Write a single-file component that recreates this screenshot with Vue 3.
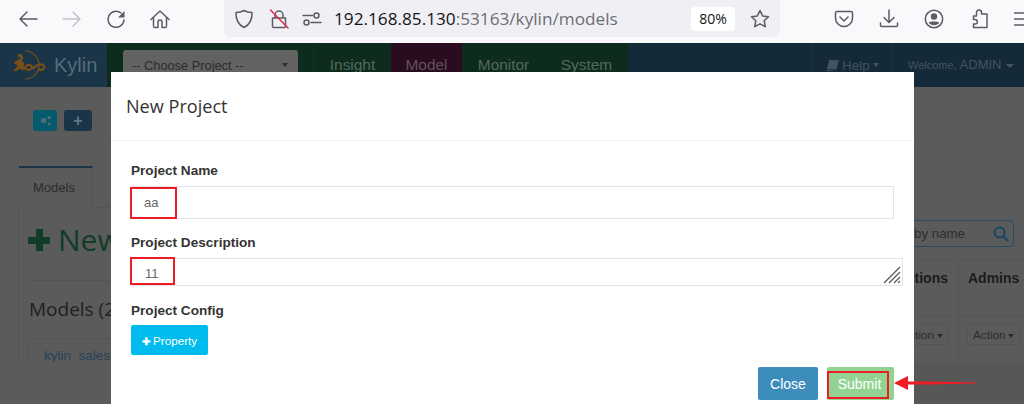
<template>
  <div class="page">
    <header class="toolbar">
      <nav class="tool-left">
        <svg class="ic" viewBox="0 0 20 20"><path d="M19 10H2M9 3 2 10l7 7" /></svg>
        <svg class="ic dim" viewBox="0 0 20 20"><path d="M1 10h17M11 3l7 7-7 7" /></svg>
        <svg class="ic" viewBox="0 0 20 20"><path d="M18 11a8 8 0 1 1-3-7" /><path class="fill" d="M18.500 2v6.500h-6.500z" /></svg>
        <svg class="ic" viewBox="0 0 20 20"><path d="M1 10.500 10 2l9 8.500M3.500 8.500V17a1.500 1.500 0 0 0 1.500 1.500h3V13a2 2 0 0 1 4 0v5.500h3a1.500 1.500 0 0 0 1.500-1.500V8.500" /></svg>
      </nav>
      <div class="urlbar">
        <svg class="ic shield" viewBox="0 0 20 20"><path d="M10 1.500c3 1.800 5 2 8 2 .3 8-2.800 12.500-8 15-5.200-2.500-8.300-7-8-15 3 0 5-.2 8-2z" /></svg>
        <svg class="ic lock" viewBox="0 0 20 20"><path d="M6 9V6a4 4 0 0 1 8 0v3M3.500 9h13v8.500a1 1 0 0 1-1 1h-11a1 1 0 0 1-1-1z" /><path class="slash" d="M1.500 1 19 19" /></svg>
        <svg class="ic perm" viewBox="0 0 20 20"><circle cx="14.500" cy="6.500" r="2.500" /><circle cx="4.500" cy="13.500" r="2.500" /><path d="M1 6.500h9.500M9 13.500h10" /></svg>
        <span class="url"><b>192.168.85.130</b>:53163/kylin/models</span>
        <span class="zoom">80%</span>
        <svg class="ic star" viewBox="0 0 20 20"><path d="m10 1.500 2.600 5.400 5.900.8-4.300 4.100 1.100 5.900-5.300-2.900-5.300 2.900 1.100-5.900-4.300-4.100 5.900-.8z" /></svg>
      </div>
      <nav class="tool-right">
        <svg class="ic" viewBox="0 0 20 20"><path d="M3 2.500h14a1.500 1.500 0 0 1 1.500 1.500v5a8.500 8.500 0 0 1-17 0V4A1.500 1.500 0 0 1 3 2.500z" /><path d="m6 8 4 4 4-4" /></svg>
        <svg class="ic" viewBox="0 0 20 20"><path d="M10 1v12.500M5 8.500l5 5 5-5M1.500 14v2.500a1 1 0 0 0 1 1h15a1 1 0 0 0 1-1V14" /></svg>
        <svg class="ic" viewBox="0 0 20 20"><circle cx="10" cy="10" r="8.700" /><circle class="fill" cx="10" cy="7.500" r="3.200" /><path class="fill" d="M4.500 13.500c2-1.500 9-1.500 11 0-2.500 3.500-8.500 3.500-11 0z" /></svg>
        <svg class="ic" viewBox="0 0 20 20"><path d="M7.500 3.500a2.500 2.500 0 0 1 5 0V5h5.500v13.500H4.500V15h1.500a2.300 2.300 0 0 0 0-4.600H4.500V7H7.500z" /></svg>
        <svg class="ic" viewBox="0 0 20 20"><path d="M0 4h20M0 10h20M0 16h20" /></svg>
      </nav>
    </header>

    <div class="backdrop">
      <div class="topnav">
        <div class="brand">
          <svg class="logo" viewBox="0 0 34 32">
            <path class="arc" d="M13 2A14 14 0 1 1 13 30" />
            <path class="body" d="M6 5l4 1 1 3-2 3 3 2-1 3 2 3-3 1-2-2-2 2-4 1 2-3 2-1-1-3-3-1 4-3 3-1-1-3-2 1z" />
            <path d="M13 19c1-4 6-4 7-1s-5 4-7 1zM21 20c3-5 9-6 11-3s-3 5-6 3" />
          </svg>
          <span>Kylin</span>
        </div>
        <div class="green">
          <div class="select"><span>-- Choose Project --</span><i class="caret small"></i></div>
          <div class="menus">
            <span class="menu">Insight</span>
            <span class="menu active">Model</span>
            <span class="menu">Monitor</span>
            <span class="menu">System</span>
          </div>
        </div>
        <div class="nav-right">
          <span class="help"><svg class="book" viewBox="0 0 14 14"><path d="M3.500 1H14l-2.500 10H1zM1 11.500 .5 13H11" /></svg>Help<i class="caret tight"></i></span>
          <span class="user"><small>Welcome,</small> ADMIN<i class="caret"></i></span>
        </div>
      </div>

      <main class="content">
        <section class="under-left">
          <div class="mini-buttons">
            <span class="mini teal"><svg viewBox="0 0 14 12"><circle cx="5" cy="6" r="3" /><circle cx="11" cy="3" r="1.800" /><circle cx="11" cy="9.500" r="1.800" /></svg></span>
            <span class="mini navy">+</span>
          </div>
          <div class="tab">Models</div>
          <div class="panel">
            <div class="new"><i class="plus"></i>New</div>
            <div class="rule"></div>
            <h3>Models (2)</h3>
            <div class="model-box"><a>kylin_sales</a></div>
          </div>
        </section>
        <section class="under-right">
          <div class="search"><span>by name</span>
            <svg viewBox="0 0 16 16"><circle cx="6.500" cy="6.500" r="5" /><path d="m10 10 5 5" /></svg>
          </div>
          <div class="table">
            <div class="th first">Actions</div>
            <div class="th">Admins</div>
            <div class="td first"><span class="act">Action<i class="caret dark"></i></span></div>
            <div class="td"><span class="act">Action<i class="caret dark"></i></span></div>
          </div>
          <div class="band"></div>
        </section>
      </main>
    </div>

    <div class="modal">
      <div class="modal-head">New Project</div>
      <form class="modal-body">
        <label>Project Name</label>
        <div class="field name">aa<span class="mark mark-a"></span></div>
        <label>Project Description</label>
        <div class="field desc">11<span class="mark mark-b"></span>
          <svg class="grip" viewBox="0 0 18 18"><path d="M17 1 1 17M17 6 6 17M17 11l-6 6M17 15l-2 2" /></svg>
        </div>
        <label>Project Config</label>
        <button type="button" class="prop"><b>✚</b> Property</button>
      </form>
      <div class="modal-foot">
        <button type="button" class="close">Close</button>
        <button type="button" class="submit">Submit<span class="mark mark-c"></span></button>
      </div>
    </div>

    <svg class="arrow" viewBox="0 0 82 14"><path d="M0 7 14 0v5.500h20l48 1v1L34 8.500H14V14z" /></svg>
  </div>
</template>

<script setup>
</script>

<style>
html, body { margin: 0; background: #5b5b5b; }
</style>

<style scoped>
.page { position: relative; width: 1024px; height: 404px; overflow: hidden; font-family: "Liberation Sans", Arial, sans-serif; background: #5b5b5b; }
.toolbar { height: 43px; background: #f9f9fb; display: flex; align-items: flex-start; box-sizing: border-box; }
.ic { width: 20px; height: 20px; fill: none; stroke: #5b5b66; stroke-width: 1.500; flex: none; stroke-linejoin: round; stroke-linecap: round; }
.ic .fill { fill: #5b5b66; stroke: none; }
.ic.dim { stroke: #c2c2c8; }
.tool-left { width: 224px; height: 37px; display: flex; align-items: center; gap: 24px; padding-left: 18px; box-sizing: border-box; flex: none; }
.urlbar { width: 556px; height: 37px; background: #f0f0f4; border-radius: 0 0 6px 6px; display: flex; align-items: center; box-sizing: border-box; padding-left: 10px; flex: none; }
.lock { margin-left: 15px; }
.lock .slash { stroke: #e22850; }
.perm { margin-left: 13px; }
.url { margin-left: 12px; font: 17.200px/24px "Open Sans", sans-serif; color: #6d6d74; width: 357px; flex: none; white-space: nowrap; }
.url b { font-weight: 400; color: #15141a; }
.zoom { width: 44px; height: 24px; flex: none; background: #fff; border-radius: 4px; font: 14px/24px "Open Sans", sans-serif; text-align: center; color: #15141a; }
.star { margin-left: 15px; }
.tool-right { flex: 1; height: 37px; display: flex; align-items: center; gap: 25px; padding-left: 54px; overflow: hidden; }

.topnav { height: 44px; display: flex; background: #1a3548; }
.brand { width: 107px; flex: none; display: flex; align-items: center; color: #566b7a; font-size: 20px; box-sizing: border-box; padding-left: 12px; gap: 8px; }
.logo { width: 34px; height: 32px; fill: none; stroke: #7a4e18; stroke-width: 2.200; flex: none; }
.logo .arc { stroke-width: 1.200; }
.logo .body { fill: #7a4e18; stroke-width: .8; }
.green { width: 521px; flex: none; background: #0d2c1d; display: flex; align-items: flex-start; color: #56685e; font-size: 15.400px; }
.select { margin: 7px 16px 0 16px; width: 175px; height: 30px; border-radius: 3px; background: #626262; color: #2c2c2c; font-size: 12.800px; display: flex; align-items: center; justify-content: space-between; padding: 0 9px; box-sizing: border-box; flex: none; }
.menus { display: grid; grid-template-columns: 77px 71px 83px 83px; border-left: 1px solid #123423; margin-left: -1px; }
.menu { height: 44px; line-height: 44px; text-align: center; }
.active { background: #290c1f; color: #62525c; }
.nav-right { flex: 1; background: #142a38; display: flex; justify-content: flex-end; color: #44535e; font-size: 13.500px; line-height: 43px; }
.help { width: 82px; box-sizing: border-box; border-left: 1px solid #183343; border-right: 1px solid #183343; padding-left: 14px; display: flex; align-items: center; gap: 3px; flex: none; }
.book { width: 13px; height: 13px; fill: #44535e; flex: none; }
.user { width: 131px; padding-left: 15px; box-sizing: border-box; white-space: nowrap; flex: none; font-size: 13px; }
.user small { font-size: 11px; }
.caret { display: inline-block; margin-left: 4px; border: 4px solid transparent; border-top-color: currentColor; border-bottom: 0; vertical-align: middle; }
.caret.small { border-width: 4px 3px 0; color: #2f2f2f; margin-right: 1px; }
.caret.tight { margin-left: 0; border-width: 4px 3.500px 0; }
.dark { color: #2c2c2c; margin-left: 3px; border-width: 4px 3.500px 0; }

.content { height: 317px; display: flex; justify-content: space-between; color: #2d2d2d; }
.under-left { width: 300px; height: 275px; overflow: hidden; padding-top: 23px; box-sizing: border-box; flex: none; }
.mini-buttons { display: flex; gap: 7px; padding-left: 33px; }
.mini { width: 24px; height: 21px; border-radius: 3px; color: #627684; display: flex; align-items: center; justify-content: center; font-weight: 700; font-size: 16px; }
.mini svg { width: 13px; fill: #4f6a78; }
.teal { background: #035a6c; }
.navy { background: #1a3448; width: 28px; }
.tab { position: relative; margin: 35px 0 -1px 19px; width: 74px; height: 42px; background: #5b5b5b; border-top: 2px solid #1a3548; border-right: 1px solid #555; box-sizing: border-box; font-size: 13px; line-height: 39px; padding-left: 14px; color: #2c2c2c; }
.panel { margin-left: 18px; border-left: 1px solid #555; border-top: 1px solid #555; padding: 0 0 0 9px; height: 160px; }
.new { margin-top: 10px; display: flex; align-items: center; gap: 8px; font: 30px/44px "Open Sans", sans-serif; color: #113c28; white-space: nowrap; }
.plus { width: 22px; height: 22px; flex: none; background: linear-gradient(#113c28, #113c28) center/100% 7px no-repeat, linear-gradient(#113c28, #113c28) center/7px 100% no-repeat; }
.rule { margin-top: 18px; border-top: 1px solid #555; }
h3 { margin: 13px 0 0 1px; font: 400 19px/30px "Open Sans", sans-serif; white-space: nowrap; color: #1f1f1f; }
.model-box { margin-top: 14px; height: 70px; border: 1px solid #555; box-sizing: border-box; padding: 9px 15px; font-size: 13.500px; color: #24425a; white-space: nowrap; }
.under-right { width: 200px; height: 317px; flex: none; padding-top: 133px; box-sizing: border-box; display: flex; flex-direction: column; }
.search { margin-left: 10px; width: 180px; height: 27px; border: 1px solid #244c69; border-radius: 4px; box-sizing: border-box; display: flex; align-items: center; justify-content: flex-end; gap: 28px; font-size: 13.300px; color: #2d2d2d; padding-right: 4px; flex: none; }
.search svg { width: 16px; height: 16px; fill: none; stroke: #1a4666; stroke-width: 2.200; }
.table { margin-top: 13px; display: grid; grid-template-columns: 135px 65px; grid-template-rows: 55px 47px; border-top: 1px solid #555; flex: none; }
.th { border-bottom: 1px solid #555; font-weight: 700; font-size: 14px; padding: 9px 0 0 9px; color: #1b1b1b; box-sizing: border-box; }
.first { text-align: right; border-right: 1px solid #555; padding-left: 0; padding-right: 10px; box-sizing: border-box; }
.td { padding-top: 8px; padding-left: 8px; box-sizing: border-box; }
.td.first { padding-right: 9px; padding-left: 0; }
.act { display: inline-block; height: 21px; border: 1px solid #555; border-radius: 3px; padding: 0 5px; box-sizing: border-box; font-size: 11.700px; line-height: 19px; white-space: nowrap; color: #2c2c2c; }
.band { flex: 1; background: #575757; }

.modal { position: absolute; left: 111px; top: 72px; width: 803px; height: 332px; background: #fff; box-sizing: border-box; display: flex; flex-direction: column; }
.modal-head { height: 69px; border-bottom: 1px solid #f1f1f1; box-sizing: border-box; padding: 0 15px; font: 18.100px/69px "Open Sans", sans-serif; color: #333; }
.modal-body { padding: 21px 0 0 20px; display: flex; flex-direction: column; align-items: flex-start; }
label { font-size: 13.600px; line-height: 18px; font-weight: 700; color: #333; }
.field { position: relative; box-sizing: border-box; border: 1px solid #e3e3ea; font-size: 13px; color: #6a6a6a; }
.name { width: 763px; height: 33px; margin: 6px 0 15px; line-height: 31px; padding-left: 12px; }
.desc { width: 772px; height: 28px; margin: 6px 0 16px; line-height: 30px; padding-left: 13px; }
.prop { margin-top: 5px; width: 77px; height: 30px; border: 0; border-radius: 2px; background: #00bcee; color: #fff; font: 11.700px "Liberation Sans", sans-serif; padding: 0; }
.prop b { font-size: 10px; }
.mark { position: absolute; border: 2px solid #ee1c25; box-sizing: border-box; }
.mark-a { left: -2px; top: 0; width: 47px; height: 32px; }
.mark-b { left: -2px; top: -2px; width: 45px; height: 28px; }
.mark-c { left: 0; top: 4px; width: 62px; height: 28px; }
.grip { position: absolute; right: 1px; bottom: 1px; width: 18px; height: 18px; fill: none; stroke: #5a5a5a; stroke-width: 1.300; }
.modal-foot { position: absolute; right: 20px; bottom: 4px; display: flex; gap: 9px; }
.close, .submit { position: relative; height: 33px; border: 0; border-radius: 2px; color: #fff; font: 14px "Liberation Sans", sans-serif; padding: 0; }
.close { width: 60px; background: #3c8dbc; }
.submit { width: 67px; background: #92d394; padding-right: 2px; }
.arrow { position: absolute; left: 894px; top: 376px; width: 82px; height: 14px; fill: #ee1c25; }
</style>
